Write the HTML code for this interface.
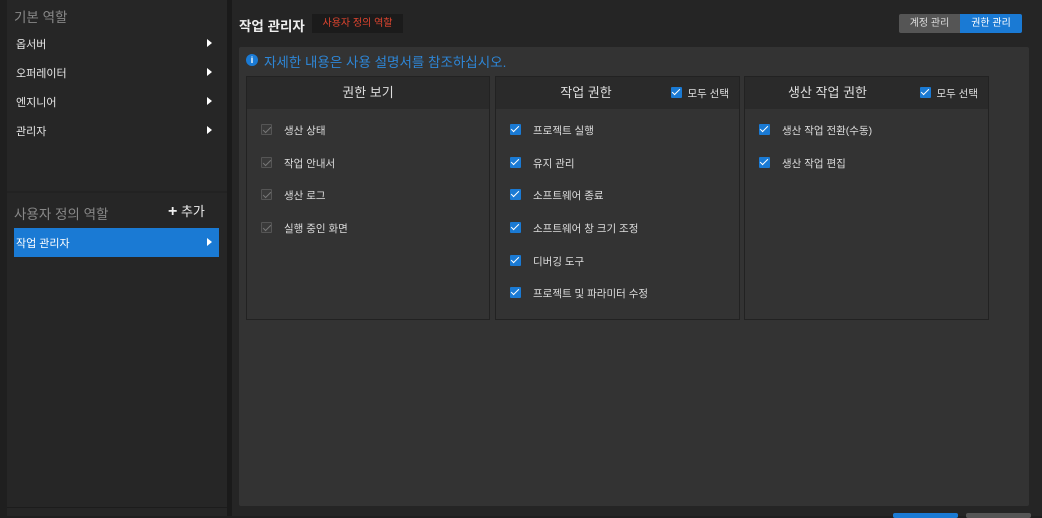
<!DOCTYPE html>
<html><head><meta charset="utf-8"><style>
*{box-sizing:border-box;margin:0;padding:0}
body{width:1042px;height:516px;background:#1f1f1f;font-family:"Liberation Sans","Noto Sans CJK KR",sans-serif;color:#ddd;position:relative;overflow:hidden;font-size:11px}
.abs{position:absolute}
.left{left:7px;top:0;width:220px;height:516px;background:#262626}
.item{position:absolute;left:16px;font-size:11px;color:#e6e6e6}
.tri{position:absolute;left:207px;width:0;height:0;border-top:4px solid transparent;border-bottom:4px solid transparent;border-left:5px solid #fff}
.card{position:absolute;top:76px;height:244px;background:#333;border:1px solid #222}
.ch{height:32px;background:#2a2a2a;line-height:31px;font-size:13px;color:#ddd;position:relative}
.tt{position:absolute;top:0;left:0;text-align:center}
.row{position:absolute;left:14px;font-size:10.5px;color:#ddd;line-height:12px}
.cb{display:inline-block;width:11px;height:11px;vertical-align:-1px;margin-right:12px;background:#1a7ad4;position:relative;border-radius:1px}
.cb:after{content:"";position:absolute;left:3px;top:0px;width:3px;height:7px;border:solid #fff;border-width:0 1.5px 1.5px 0;transform:rotate(45deg)}
.cb.d{background:#3a3a3a;border:1px solid #555}
.cb.d:after{border-color:#777;left:2.5px;top:-0.5px}
.all{position:absolute;right:10px;top:2px;font-size:10.5px;line-height:31px}
.all .cb{margin-right:5px}
</style></head><body>
<div class="abs left"></div>
<div class="abs" style="left:14px;top:6px;font-size:13.5px;color:#888">기본 역할</div>
<div class="item" style="top:36px">옵서버</div><div class="tri" style="top:39px"></div>
<div class="item" style="top:65px">오퍼레이터</div><div class="tri" style="top:68px"></div>
<div class="item" style="top:94px">엔지니어</div><div class="tri" style="top:97px"></div>
<div class="item" style="top:123px">관리자</div><div class="tri" style="top:126px"></div>
<div class="abs" style="left:7px;top:191px;width:220px;height:2px;background:#222"></div>
<div class="abs" style="left:14px;top:203px;font-size:13.5px;color:#888">사용자 정의 역할</div>
<div class="abs" style="left:168px;top:201px;font-size:13px;color:#eee"><b style="font-size:16px">+</b> 추가</div>
<div class="abs" style="left:14px;top:228px;width:205px;height:29px;background:#1a7ad4"></div>
<div class="item" style="top:235px;color:#fff">작업 관리자</div><div class="tri" style="top:238px"></div>
<div class="abs" style="left:7px;top:507px;width:220px;height:1px;background:#1c1c1c"></div>
<div class="abs" style="left:227px;top:0;width:5px;height:516px;background:#1a1a1a"></div>
<div class="abs" style="left:232px;top:0;width:810px;height:516px;background:#252525"></div>
<div class="abs" style="left:239px;top:15px;font-size:13.5px;font-weight:bold;color:#eee">작업 관리자</div>
<div class="abs" style="left:312px;top:14px;width:91px;height:19px;background:#1b1b1b;color:#e0452f;font-size:10px;text-align:center;line-height:19px">사용자 정의 역할</div>
<div class="abs" style="left:899px;top:14px;width:61px;height:19px;background:#555;color:#ddd;font-size:10px;text-align:center;line-height:19px;border-radius:2px 0 0 2px">계정 관리</div>
<div class="abs" style="left:960px;top:14px;width:62px;height:19px;background:#1a7ad4;color:#fff;font-size:10px;text-align:center;line-height:19px;border-radius:0 2px 2px 0">권한 관리</div>
<div class="abs" style="left:239px;top:47px;width:790px;height:459px;background:#333;border-radius:2px"></div>
<div class="abs" style="left:246px;top:54px;width:12px;height:12px;border-radius:50%;background:#1a7ad4;color:#fff;font-size:9px;font-weight:bold;text-align:center;line-height:12px">i</div>
<div class="abs" style="left:264px;top:51px;font-size:13.5px;color:#2e86d6">자세한 내용은 사용 설명서를 참조하십시오.</div>
<div class="card" style="left:246px;width:244px"><div class="ch"><span class="tt" style="width:242px">권한 보기</span></div>
<div class="row" style="top:47px"><span class="cb d"></span>생산 상태</div>
<div class="row" style="top:80px"><span class="cb d"></span>작업 안내서</div>
<div class="row" style="top:112px"><span class="cb d"></span>생산 로그</div>
<div class="row" style="top:145px"><span class="cb d"></span>실행 중인 화면</div></div>
<div class="card" style="left:495px;width:245px"><div class="ch"><span class="tt" style="width:180px">작업 권한</span><span class="all"><span class="cb"></span>모두 선택</span></div>
<div class="row" style="top:47px"><span class="cb"></span>프로젝트 실행</div>
<div class="row" style="top:80px"><span class="cb"></span>유지 관리</div>
<div class="row" style="top:112px"><span class="cb"></span>소프트웨어 종료</div>
<div class="row" style="top:145px"><span class="cb"></span>소프트웨어 창 크기 조정</div>
<div class="row" style="top:178px"><span class="cb"></span>디버깅 도구</div>
<div class="row" style="top:210px"><span class="cb"></span>프로젝트 및 파라미터 수정</div></div>
<div class="card" style="left:744px;width:245px"><div class="ch"><span class="tt" style="width:165px">생산 작업 권한</span><span class="all"><span class="cb"></span>모두 선택</span></div>
<div class="row" style="top:47px"><span class="cb"></span>생산 작업 전환(수동)</div>
<div class="row" style="top:80px"><span class="cb"></span>생산 작업 편집</div></div>
<div class="abs" style="left:893px;top:513px;width:65px;height:5px;background:#1a7ad4;border-radius:2px"></div>
<div class="abs" style="left:966px;top:513px;width:65px;height:5px;background:#555;border-radius:2px"></div>
</body></html>
